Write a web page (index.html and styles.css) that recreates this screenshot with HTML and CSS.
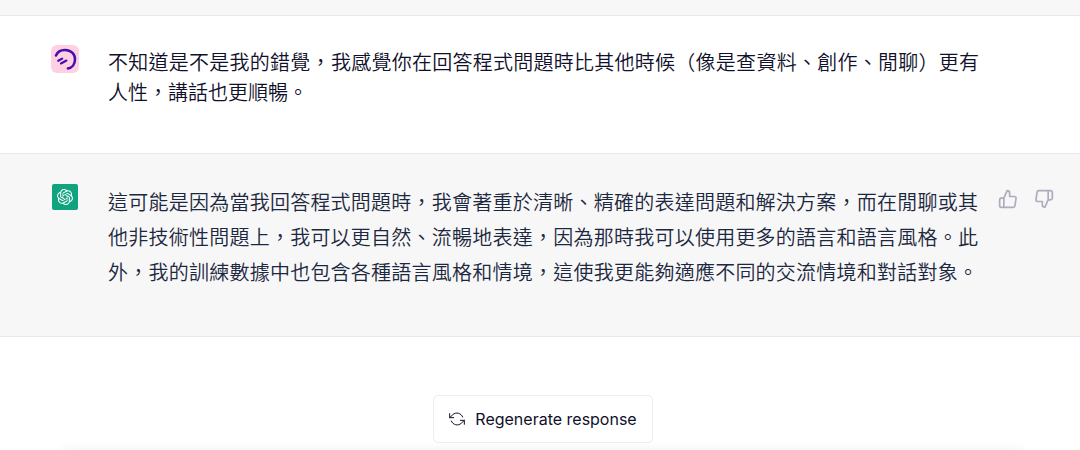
FILE: index.html
```html
<!DOCTYPE html>
<html lang="zh-Hant">
<head>
<meta charset="utf-8">
<meta name="viewport" content="width=device-width, initial-scale=1">
<title>Chat</title>
<link rel="stylesheet" href="styles.css">
</head>
<body>
<main class="chat">
  <div class="previous"></div>
  <article class="message message-user">
    <svg class="avatar" viewBox="0 0 28 28" role="img" aria-label="User">
      <rect width="28" height="28" rx="6" fill="#ffd0e2"/>
      <g fill="none" stroke="#4310b0" stroke-linecap="round" stroke-linejoin="round">
        <path d="M5 10.500C6.500 6.800 10 4.800 14 4.900C20 5 24 9 24 14.200C24 19.200 21.200 22.800 16.800 23.400" stroke-width="2.500"/>
        <path d="M7.200 15.800L11.200 13.600M10 18.400L15.400 15.600" stroke-width="2.200"/>
      </g>
    </svg>
    <p class="text">不知道是不是我的錯覺，我感覺你在回答程式問題時比其他時候（像是查資料、創作、閒聊）更有人性，講話也更順暢。</p>
  </article>
  <article class="message message-reply">
    <div class="avatar avatar-reply">
      <svg viewBox="0 0 24 24" fill="#fff" role="img" aria-label="ChatGPT"><path d="M22.282 9.821a5.985 5.985 0 0 0-.516-4.91 6.046 6.046 0 0 0-6.510-2.900A6.065 6.065 0 0 0 4.981 4.182a5.985 5.985 0 0 0-3.998 2.900 6.046 6.046 0 0 0 .743 7.097 5.980 5.980 0 0 0 .510 4.911 6.051 6.051 0 0 0 6.515 2.900A5.985 5.985 0 0 0 13.260 24a6.056 6.056 0 0 0 5.772-4.206 5.990 5.990 0 0 0 3.998-2.900 6.056 6.056 0 0 0-.748-7.073zM13.260 22.430a4.476 4.476 0 0 1-2.876-1.041l.142-.080 4.778-2.758a.795.795 0 0 0 .393-.681v-6.737l2.020 1.169a.071.071 0 0 1 .038.052v5.583a4.504 4.504 0 0 1-4.495 4.493zM3.600 18.304a4.471 4.471 0 0 1-.535-3.014l.142.085 4.783 2.758a.771.771 0 0 0 .780 0l5.843-3.368v2.332a.080.080 0 0 1-.033.062L9.740 19.950a4.500 4.500 0 0 1-6.140-1.646zM2.341 7.896a4.485 4.485 0 0 1 2.365-1.973V11.600a.766.766 0 0 0 .388.676l5.815 3.355-2.020 1.168a.076.076 0 0 1-.071 0l-4.830-2.786A4.504 4.504 0 0 1 2.341 7.872zm16.596 3.856l-5.833-3.387L15.119 7.200a.076.076 0 0 1 .071 0l4.830 2.791a4.494 4.494 0 0 1-.677 8.104v-5.677a.790.790 0 0 0-.406-.666zm2.010-3.024l-.141-.085-4.774-2.782a.776.776 0 0 0-.785 0L9.409 9.230V6.897a.066.066 0 0 1 .028-.061l4.830-2.787a4.499 4.499 0 0 1 6.680 4.660zM8.307 12.863l-2.020-1.164a.080.080 0 0 1-.038-.057V6.074a4.499 4.499 0 0 1 7.376-3.453l-.142.080L8.704 5.460a.795.795 0 0 0-.393.681zm1.097-2.366l2.602-1.499 2.607 1.500v2.999l-2.597 1.500-2.607-1.500z"/></svg>
    </div>
    <p class="text text-reply">這可能是因為當我回答程式問題時，我會著重於清晰、精確的表達問題和解決方案，而在閒聊或其他非技術性問題上，我可以更自然、流暢地表達，因為那時我可以使用更多的語言和語言風格。此外，我的訓練數據中也包含各種語言風格和情境，這使我更能夠適應不同的交流情境和對話對象。</p>
    <div class="votes">
      <button class="vote" type="button" aria-label="Good response">
        <svg viewBox="0 0 24 24"><path d="M14 9V5a3 3 0 0 0-3-3l-4 9v11h11.280a2 2 0 0 0 2-1.700l1.380-9a2 2 0 0 0-2-2.300zM7 22H4a2 2 0 0 1-2-2v-7a2 2 0 0 1 2-2h3"/></svg>
      </button>
      <button class="vote" type="button" aria-label="Bad response">
        <svg viewBox="0 0 24 24"><path d="M10 15v4a3 3 0 0 0 3 3l4-9V2H5.720a2 2 0 0 0-2 1.700l-1.380 9a2 2 0 0 0 2 2.300zm7-13h2.670A2.310 2.310 0 0 1 22 4v7a2.310 2.310 0 0 1-2.330 2H17"/></svg>
      </button>
    </div>
  </article>
  <footer class="footer">
    <button class="regenerate" type="button">
      <svg viewBox="0 0 24 24"><path d="M1 4v6h6M23 20v-6h-6M20.490 9A9 9 0 0 0 5.640 5.640L1 10m22 4l-4.640 4.360A9 9 0 0 1 3.510 15"/></svg>
      Regenerate response
    </button>
    <div class="composer"></div>
  </footer>
</main>
</body>
</html>
```
FILE: styles.css
```css
* {
  box-sizing: border-box;
}

body {
  margin: 0;
  background: #fff;
  font-family: Inter, "Noto Sans CJK TC", sans-serif;
}

.chat {
  height: 100vh;
  overflow: hidden;
}

.previous {
  height: 16px;
  background: #f7f7f7;
  border-bottom: 1px solid #e9e9eb;
}

.message {
  display: flex;
  align-items: flex-start;
  padding: 29px 26px 46px 51px;
  border-bottom: 1px solid #e9e9eb;
}

.message-reply {
  padding-top: 30px;
  padding-bottom: 47px;
  background: #f7f7f7;
}

.avatar {
  flex: none;
  width: 28px;
  height: 28px;
}

.avatar-reply {
  display: flex;
  align-items: center;
  justify-content: center;
  width: 26px;
  height: 26px;
  margin: 0 1px;
  background: #10a37f;
  border-radius: 2px;
}

.avatar-reply svg {
  width: 16px;
  height: 16px;
}

.text {
  flex: 1;
  margin: 0 75px 0 29px;
  padding-top: 2px;
  color: #10102a;
  font-family: "Noto Sans CJK TC", sans-serif;
  font-size: 20px;
  font-weight: 350;
  line-height: 30px;
  text-align: justify;
}

.text-reply {
  margin-right: 20px;
  padding-top: 0;
  color: #1c2740;
  line-height: 35px;
  text-align-last: justify;
}

.votes {
  display: flex;
  gap: 16px;
  padding-top: 5px;
}

.vote {
  display: flex;
  padding: 0;
  background: none;
  border: 0;
}

.vote svg {
  width: 20px;
  height: 20px;
  fill: none;
  stroke: #acacbe;
  stroke-width: 2;
  stroke-linecap: round;
  stroke-linejoin: round;
}

.footer {
  display: flex;
  flex-direction: column;
  align-items: center;
  gap: 8px;
  padding: 58px 54px 0 60px;
}

.regenerate {
  display: flex;
  align-items: center;
  gap: 10px;
  padding: 12px 15px;
  background: #fff;
  border: 1px solid #ececf1;
  border-radius: 5px;
  color: #10102a;
  font-family: Inter, sans-serif;
  font-size: 16px;
  line-height: 22px;
}

.regenerate svg {
  width: 16px;
  height: 16px;
  fill: none;
  stroke: currentColor;
  stroke-width: 1.5;
  stroke-linecap: round;
  stroke-linejoin: round;
}

.composer {
  align-self: stretch;
  height: 60px;
  border-radius: 8px;
  box-shadow: 0 0 12px rgba(0, 0, 0, 0.08);
}
```
